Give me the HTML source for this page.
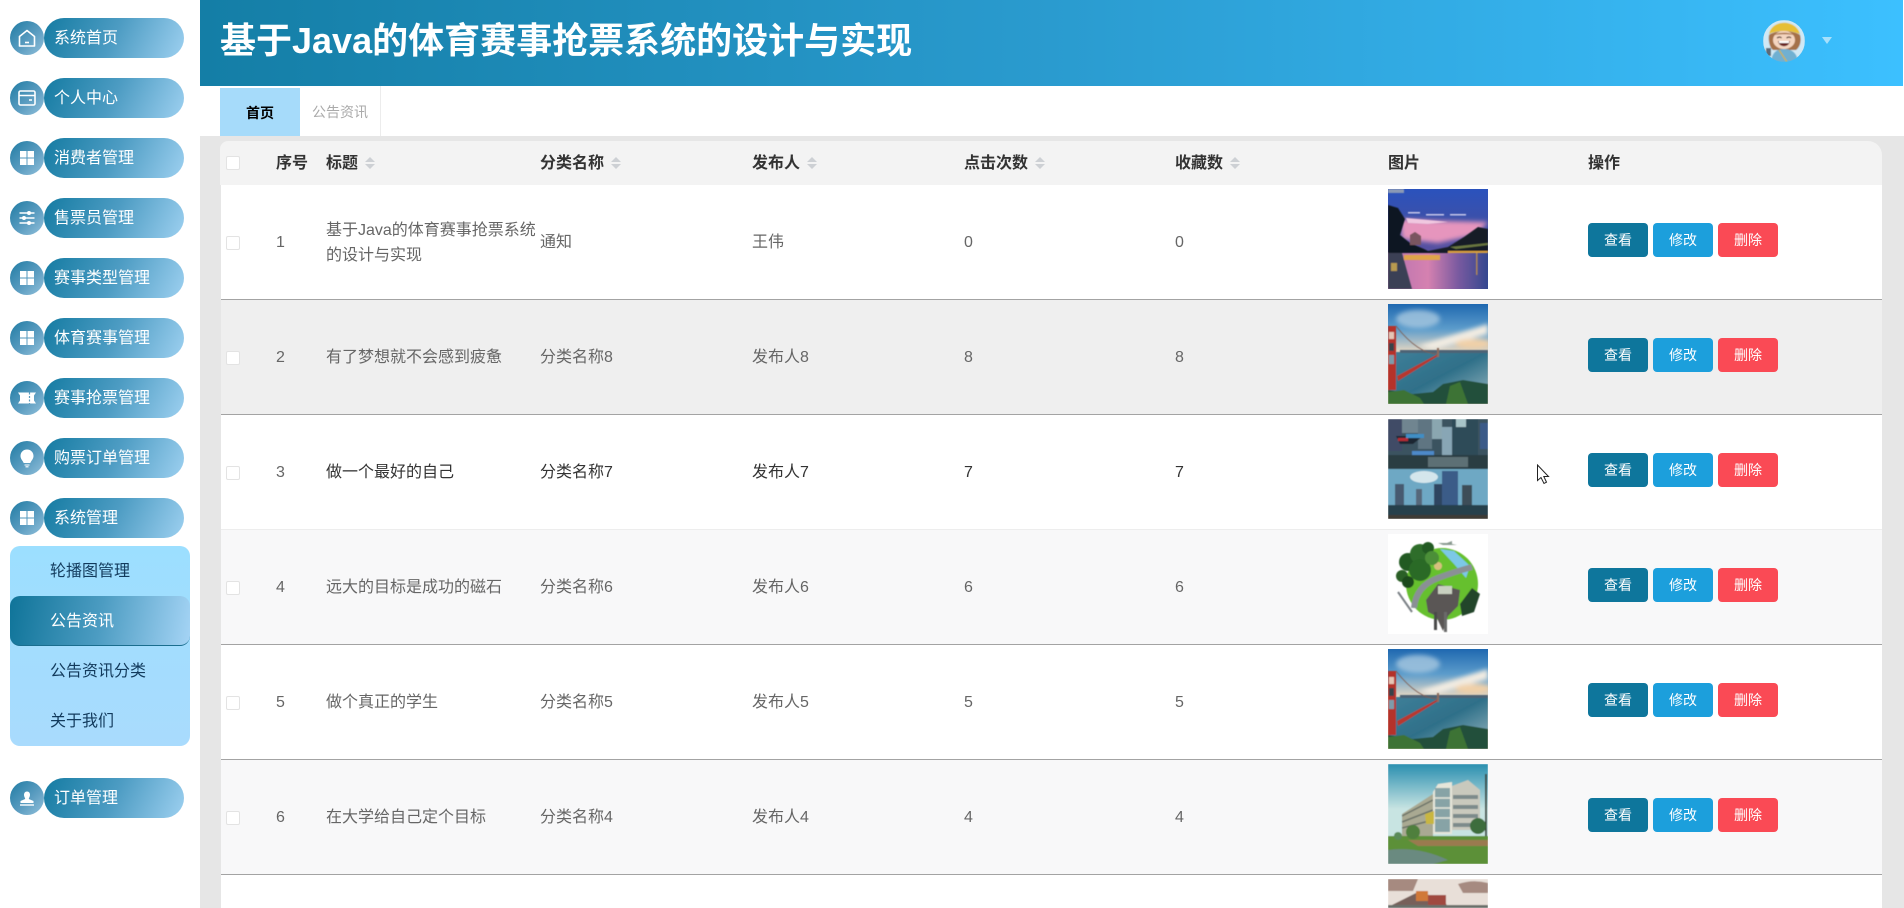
<!DOCTYPE html>
<html lang="zh-CN">
<head>
<meta charset="utf-8">
<title>基于Java的体育赛事抢票系统的设计与实现</title>
<style>
*{box-sizing:border-box}
html,body{margin:0;padding:0;width:1904px;height:908px;overflow:hidden;background:#fff}
body{position:relative;font-family:"Liberation Sans","Noto Sans CJK SC",sans-serif;font-size:16px}
.abs,.pill,.ci,.sub,.row,.t,.btn,.cb,.th,.sort,.img{position:absolute}
.ci{left:10px;width:34px;height:34px;border-radius:50%;background:linear-gradient(135deg,#1f7ba3 0%,#5a9cc0 55%,#93c1db 100%)}
.ci svg{position:absolute;left:7px;top:7px;width:20px;height:20px}
.pill{left:44px;width:140px;height:40px;border-radius:20px;background:linear-gradient(115deg,#147ba2 0%,#4d9cc3 50%,#9dd0f0 100%);color:#fff;line-height:42px;padding-left:10px;white-space:nowrap}
.sub{left:10px;width:180px;height:50px;line-height:52px;padding-left:40px;color:#123a5c}
.row{left:221px;width:1661px;height:115px;border-bottom:1px solid #a3a3a3;background:#fff;color:#666;overflow:hidden}
.t{line-height:24px;white-space:nowrap}
.th{top:152px;line-height:24px;font-weight:bold;color:#333;white-space:nowrap}
.sort{top:156px;width:10px;height:14px}
.cb{left:5px;width:14px;height:14px;background:#fff;border:1px solid #e3e3e3;border-radius:2px}
.btn{top:38px;width:60px;height:34px;border-radius:4px;color:#fff;font-size:14px;line-height:34px;text-align:center}
.b1{left:1367px;background:#0e769c}
.b2{left:1432px;background:#1c9fdc}
.b3{left:1497px;background:#fa4a55}
.img{left:1167px;top:4px;width:100px;height:100px;display:block}
</style>
</head>
<body>

<!-- Header -->
<div class="abs" style="left:200px;top:0;width:1703px;height:86px;background:linear-gradient(90deg,#147ea6 0%,#2a9bcf 50%,#3cc0ff 100%)"></div>
<div class="abs" style="left:220px;top:16px;height:50px;line-height:50px;font-size:36px;font-weight:bold;color:#fff;white-space:nowrap">基于Java的体育赛事抢票系统的设计与实现</div>

<!-- Avatar -->
<svg class="abs" style="left:1763px;top:20px" width="42" height="42" viewBox="0 0 42 42">
<defs><clipPath id="av"><circle cx="21" cy="21" r="21"/></clipPath><filter id="avb"><feGaussianBlur stdDeviation=".5"/></filter></defs>
<g clip-path="url(#av)" filter="url(#avb)">
<rect width="42" height="42" fill="#cfe8f5"/>
<path d="M6 14C9 -1 33 -1 37 14C27 10 15 10 6 14Z" fill="#e6bf35"/>
<path d="M6 15C12 10 31 10 37 15C39 22 36 28 33 30H10C7 28 5 21 6 15Z" fill="#a5714a"/>
<ellipse cx="21" cy="20" rx="11" ry="9" fill="#f4d5c0"/>
<path d="M11 15C15 12 27 12 31 15C26 14 16 14 11 15Z" fill="#a5714a"/>
<path d="M14 18q3-2 4.500 0M23.500 18q3-2 4.500 0" stroke="#4d2f22" stroke-width="1.200" fill="none"/>
<path d="M15 21H27C26 28 16 28 15 21Z" fill="#6a2828"/>
<rect x="16" y="21" width="10" height="2" fill="#fff"/>
<path d="M8 42C9 32 14 29 21 29C29 29 34 33 35 42Z" fill="#70b0d2"/>
<path d="M16 30L24 42" stroke="#d2b23c" stroke-width="1.200"/>
<rect x="3" y="28" width="5" height="8" fill="#5b6a78"/>
</g>
</svg>
<svg class="abs" style="left:1822px;top:37px" width="10" height="7" viewBox="0 0 10 7"><path d="M0 0H10L5 7Z" fill="#a8e0fb"/></svg>

<!-- Tabs -->
<div class="abs" style="left:220px;top:88px;width:80px;height:48px;background:#a6dbfa;color:#000;font-size:14px;font-weight:bold;line-height:50px;text-align:center">首页</div>
<div class="abs" style="left:300px;top:86px;width:81px;height:50px;border-right:1px solid #ececec;color:#aaa;font-size:14px;line-height:52px;padding-left:12px">公告资讯</div>

<!-- Content background -->
<div class="abs" style="left:200px;top:136px;width:1704px;height:772px;background:#e6e6e6"></div>
<div class="abs" style="left:1903px;top:0;width:1px;height:136px;background:#fff"></div>

<!-- Table head -->
<div class="abs" style="left:220px;top:141px;width:1662px;height:44px;background:#f3f3f3;border-radius:8px 14px 0 0"></div>
<div class="cb" style="left:226px;top:156px"></div>
<div class="th" style="left:276px">序号</div>
<div class="th" style="left:326px">标题</div>
<svg class="sort" style="left:365px" viewBox="0 0 10 14"><path d="M5 1L10 6H0ZM0 8H10L5 13Z" fill="#cdd0d4"/></svg>
<div class="th" style="left:540px">分类名称</div>
<svg class="sort" style="left:611px" viewBox="0 0 10 14"><path d="M5 1L10 6H0ZM0 8H10L5 13Z" fill="#cdd0d4"/></svg>
<div class="th" style="left:752px">发布人</div>
<svg class="sort" style="left:807px" viewBox="0 0 10 14"><path d="M5 1L10 6H0ZM0 8H10L5 13Z" fill="#cdd0d4"/></svg>
<div class="th" style="left:964px">点击次数</div>
<svg class="sort" style="left:1035px" viewBox="0 0 10 14"><path d="M5 1L10 6H0ZM0 8H10L5 13Z" fill="#cdd0d4"/></svg>
<div class="th" style="left:1175px">收藏数</div>
<svg class="sort" style="left:1230px" viewBox="0 0 10 14"><path d="M5 1L10 6H0ZM0 8H10L5 13Z" fill="#cdd0d4"/></svg>
<div class="th" style="left:1388px">图片</div>
<div class="th" style="left:1588px">操作</div>

<!-- Shared filter & bridge image -->
<svg width="0" height="0" style="position:absolute">
<defs>
<filter id="bl" x="-5%" y="-5%" width="110%" height="110%"><feGaussianBlur stdDeviation=".6"/></filter>
<filter id="bl2" x="-20%" y="-20%" width="140%" height="140%"><feGaussianBlur stdDeviation="2.500"/></filter>
<linearGradient id="brsky" x1="0" y1="0" x2="0" y2="1"><stop offset="0" stop-color="#1f68b0"/><stop offset=".25" stop-color="#5c9ccb"/><stop offset=".48" stop-color="#e8d8c2"/></linearGradient>
<linearGradient id="brw" x1="0" y1="0" x2="1" y2="1"><stop offset="0" stop-color="#3f7f99"/><stop offset=".5" stop-color="#2f7089"/><stop offset="1" stop-color="#9cb9c2"/></linearGradient>
<symbol id="bridge" viewBox="0 0 100 100">
<rect width="100" height="100" fill="url(#brsky)"/>
<g filter="url(#bl2)">
<ellipse cx="30" cy="15" rx="22" ry="9" fill="#a8c8e0" opacity=".8"/>
<path d="M30 42L100 20V30L45 46Z" fill="#f2ece2"/>
<ellipse cx="85" cy="40" rx="18" ry="5" fill="#f0d0a8"/>
</g>
<g filter="url(#bl)">
<rect y="48" width="100" height="52" fill="url(#brw)"/>
<rect x="12" y="46" width="88" height="3" fill="#4e6474"/>
<path d="M9 72L50 50V52L10 77Z" fill="#b8392f"/>
<rect x="0" y="22" width="8" height="64" fill="#b5332a"/>
<rect x="1" y="28" width="5" height="7" fill="#e5c5b5"/>
<rect x="1" y="39" width="5" height="8" fill="#39424a"/>
<rect x="1" y="51" width="5" height="9" fill="#7d9cab"/>
<path d="M8 22Q30 50 50 50" stroke="#7d5c50" stroke-width=".8" fill="none"/>
<rect x="49" y="44" width="2" height="9" fill="#8d6c5c"/>
<path d="M0 86L25 90L45 88L55 80L75 76L100 80V100H0Z" fill="#24503a"/>
<path d="M0 88L16 86L32 94L36 100H0ZM58 100L62 82L72 78L80 100Z" fill="#3d7334"/>
</g>
</symbol>
</defs>
</svg>

<!-- Row 1 -->
<div class="row" style="top:185px">
<div class="cb" style="top:51px"></div>
<div class="t" style="left:55px;top:46px">1</div>
<div class="t" style="left:105px;top:34px;line-height:24.500px">基于Java的体育赛事抢票系统<br>的设计与实现</div>
<div class="t" style="left:319px;top:46px">通知</div>
<div class="t" style="left:531px;top:46px">王伟</div>
<div class="t" style="left:743px;top:46px">0</div>
<div class="t" style="left:954px;top:46px">0</div>
<svg class="img" viewBox="0 0 100 100">
<defs><linearGradient id="ns" x1="0" y1="0" x2="0" y2="1"><stop offset="0" stop-color="#2a52bd"/><stop offset=".5" stop-color="#3d50a8"/><stop offset="1" stop-color="#5a50a0"/></linearGradient>
<linearGradient id="nw" x1="0" y1="0" x2="1" y2="0"><stop offset="0" stop-color="#b873b0"/><stop offset=".4" stop-color="#d581b0"/><stop offset=".7" stop-color="#7a5aa0"/><stop offset="1" stop-color="#34478f"/></linearGradient></defs>
<rect width="100" height="64" fill="url(#ns)"/>
<g filter="url(#bl2)"><path d="M12 30L60 32L100 33L88 46L50 54L14 50Z" fill="#e695bd"/></g>
<g filter="url(#bl)">
<path d="M18 29L40 31L60 33L40 35L20 34Z" fill="#f0c8e0"/>
<path d="M38 25h18v1.500H38ZM62 25h16v1.500H62ZM20 23h12v1.500H20Z" fill="#c8c8ea"/>
</g>
<rect y="63" width="100" height="37" fill="url(#nw)"/>
<g filter="url(#bl)">
<path d="M35 63L60 58L76 48L90 38L100 40V64L35 64Z" fill="#161e28"/>
<path d="M0 16L10 19L17 30L12 46L22 54L36 60L44 64H0Z" fill="#111820"/>
<path d="M22 46L27 43L33 47V56H22Z" fill="#7a5560"/>
<path d="M60 62H100V64H60Z" fill="#d9a040"/>
<path d="M62 58L100 54V56L68 60Z" fill="#6a7840"/>
<rect x="16" y="66" width="36" height="5" fill="#e0a44a"/>
<path d="M0 64H14L24 100H0Z" fill="#3a3f55"/>
<rect x="88" y="64" width="1.500" height="22" fill="#d8a040" opacity=".7"/>
<rect x="0" y="0" width="16" height="4" fill="#8a99b5"/>
<rect x="3" y="74" width="6" height="8" fill="#b89a50"/>
</g></svg>
<div class="btn b1">查看</div><div class="btn b2">修改</div><div class="btn b3">删除</div>
</div>

<!-- Row 2 -->
<div class="row" style="top:300px;background:#efefef">
<div class="cb" style="top:51px"></div>
<div class="t" style="left:55px;top:46px">2</div>
<div class="t" style="left:105px;top:46px">有了梦想就不会感到疲惫</div>
<div class="t" style="left:319px;top:46px">分类名称8</div>
<div class="t" style="left:531px;top:46px">发布人8</div>
<div class="t" style="left:743px;top:46px">8</div>
<div class="t" style="left:954px;top:46px">8</div>
<svg class="img" viewBox="0 0 100 100"><use href="#bridge" width="100" height="100"/></svg>
<div class="btn b1">查看</div><div class="btn b2">修改</div><div class="btn b3">删除</div>
</div>

<!-- Row 3 -->
<div class="row" style="top:415px;border-bottom-color:#ededed;color:#333">
<div class="cb" style="top:51px"></div>
<div class="t" style="left:55px;top:46px;color:#666">3</div>
<div class="t" style="left:105px;top:46px">做一个最好的自己</div>
<div class="t" style="left:319px;top:46px">分类名称7</div>
<div class="t" style="left:531px;top:46px">发布人7</div>
<div class="t" style="left:743px;top:46px">7</div>
<div class="t" style="left:954px;top:46px">7</div>
<svg class="img" viewBox="0 0 100 100"><g filter="url(#bl)">
<rect width="100" height="50" fill="#3a5260"/>
<rect x="0" y="0" width="14" height="32" fill="#3f4c66"/>
<rect x="14" y="0" width="16" height="14" fill="#6f8590"/>
<rect x="30" y="0" width="14" height="30" fill="#5f7582"/>
<rect x="44" y="0" width="10" height="20" fill="#8aa6b0"/>
<rect x="54" y="8" width="12" height="28" fill="#88a6b5"/>
<rect x="64" y="0" width="26" height="38" fill="#2d4c58"/>
<rect x="68" y="0" width="10" height="8" fill="#a8c4c8"/>
<rect x="92" y="4" width="8" height="26" fill="#3b5a88"/>
<path d="M8 17H35L25 25H12Z" fill="#1c2530"/>
<path d="M18 15H36V19H18Z" fill="#3f8ec4"/>
<rect x="10" y="19" width="10" height="3" fill="#b62a32"/>
<rect x="24" y="32" width="22" height="4" fill="#4e89c9"/>
<rect y="36" width="100" height="14" fill="#2b3e42"/>
<rect x="40" y="38" width="40" height="10" fill="#5d7074"/>
<rect y="50" width="100" height="36" fill="#6ea8c4"/>
<ellipse cx="36" cy="58" rx="14" ry="6" fill="#d4e6ec"/>
<rect x="7" y="65" width="9" height="22" fill="#465a70"/>
<rect x="28" y="70" width="6" height="16" fill="#56687a"/>
<rect x="46" y="65" width="8" height="22" fill="#2f4560"/>
<rect x="54" y="52" width="16" height="36" fill="#3a5c88"/>
<rect x="74" y="66" width="10" height="22" fill="#3d4d58"/>
<rect y="86" width="100" height="10" fill="#27414b"/>
<rect x="0" y="96" width="100" height="4" fill="#3e3a35"/>
</g></svg>
<div class="btn b1">查看</div><div class="btn b2">修改</div><div class="btn b3">删除</div>
</div>

<!-- Row 4 -->
<div class="row" style="top:530px;background:#f8f8f9">
<div class="cb" style="top:51px"></div>
<div class="t" style="left:55px;top:46px">4</div>
<div class="t" style="left:105px;top:46px">远大的目标是成功的磁石</div>
<div class="t" style="left:319px;top:46px">分类名称6</div>
<div class="t" style="left:531px;top:46px">发布人6</div>
<div class="t" style="left:743px;top:46px">6</div>
<div class="t" style="left:954px;top:46px">6</div>
<svg class="img" viewBox="0 0 100 100"><rect width="100" height="100" fill="#fff"/><g filter="url(#bl)">
<circle cx="54" cy="50" r="36" fill="#66c02e"/>
<path d="M52 15L66 17L82 32L78 44L66 30Z" fill="#7cc8e6"/>
<circle cx="50" cy="32" r="4" fill="#d6c07e"/>
<circle cx="14" cy="42" r="6" fill="#2a5f26"/><circle cx="20" cy="28" r="9" fill="#245a22"/>
<circle cx="32" cy="20" r="10" fill="#2f6d2a"/><circle cx="40" cy="14" r="6" fill="#245a22"/><circle cx="32" cy="36" r="11" fill="#2b6a28"/>
<circle cx="44" cy="24" r="7" fill="#4b8f38"/>
<circle cx="20" cy="48" r="6" fill="#1f4a1e"/>
<path d="M26 74Q28 52 50 44Q66 38 84 33" stroke="#8a9095" stroke-width="6" fill="none"/>
<path d="M10 58L24 78" stroke="#7a8085" stroke-width="2" fill="none"/>
<path d="M38 66L50 50L72 56L70 72L60 82L55 97L48 82L40 78Z" fill="#5a5654"/>
<rect x="50" y="52" width="14" height="8" fill="#c8d0c0"/>
<rect x="46" y="78" width="3" height="18" fill="#4a4a4a"/><rect x="56" y="78" width="3" height="20" fill="#6a6a6a"/>
<path d="M84 54L92 60L86 78L74 82L72 70Z" fill="#20442a"/>
<path d="M50 9h9l5-2v3l5 1H55Z" fill="#8a9a90"/>
</g></svg>
<div class="btn b1">查看</div><div class="btn b2">修改</div><div class="btn b3">删除</div>
</div>

<!-- Row 5 -->
<div class="row" style="top:645px">
<div class="cb" style="top:51px"></div>
<div class="t" style="left:55px;top:46px">5</div>
<div class="t" style="left:105px;top:46px">做个真正的学生</div>
<div class="t" style="left:319px;top:46px">分类名称5</div>
<div class="t" style="left:531px;top:46px">发布人5</div>
<div class="t" style="left:743px;top:46px">5</div>
<div class="t" style="left:954px;top:46px">5</div>
<svg class="img" viewBox="0 0 100 100"><use href="#bridge" width="100" height="100"/></svg>
<div class="btn b1">查看</div><div class="btn b2">修改</div><div class="btn b3">删除</div>
</div>

<!-- Row 6 -->
<div class="row" style="top:760px;background:#f8f8f9">
<div class="cb" style="top:51px"></div>
<div class="t" style="left:55px;top:46px">6</div>
<div class="t" style="left:105px;top:46px">在大学给自己定个目标</div>
<div class="t" style="left:319px;top:46px">分类名称4</div>
<div class="t" style="left:531px;top:46px">发布人4</div>
<div class="t" style="left:743px;top:46px">4</div>
<div class="t" style="left:954px;top:46px">4</div>
<svg class="img" viewBox="0 0 100 100"><g filter="url(#bl)">
<defs><linearGradient id="bs" x1="0" y1="0" x2="0" y2="1"><stop offset="0" stop-color="#2a8fb0"/><stop offset=".6" stop-color="#c8e4e2"/></linearGradient></defs>
<rect width="100" height="75" fill="url(#bs)"/>
<path d="M14 50L45 30V72H14Z" fill="#a9a992"/>
<path d="M14 52L45 36M14 58L45 46M14 64L45 56" stroke="#6b7268" stroke-width="1.500"/>
<path d="M45 28L50 20L64 18V70H45Z" fill="#e6e6da"/>
<path d="M47 24h15v44H47Z" fill="#55808a" opacity=".65"/>
<path d="M47 34h15M47 44h15M47 54h15" stroke="#e6e6da" stroke-width="1.500"/>
<path d="M64 22L80 16L92 26V66H64Z" fill="#c9c9bd"/>
<path d="M65 31h25v4H65ZM65 41h25v4H65ZM65 50h25v4H65ZM65 59h25v4H65Z" fill="#7d8b8b"/>
<path d="M37 50L46 47V60L38 60Z" fill="#c8b640"/>
<rect x="97" y="10" width="2" height="70" fill="#3d4a40"/>
<circle cx="90" cy="62" r="8" fill="#3c6d3c"/>
<rect y="72" width="100" height="28" fill="#5c9038"/>
<path d="M0 86Q30 82 60 96L45 100H0Z" fill="#6a8a80"/>
<path d="M20 76H100V82H30Z" fill="#9a7a50"/>
<circle cx="25" cy="68" r="7" fill="#4f7f3e"/>
<circle cx="10" cy="72" r="4" fill="#5a8a58"/>
</g></svg>
<div class="btn b1">查看</div><div class="btn b2">修改</div><div class="btn b3">删除</div>
</div>

<!-- Row 7 -->
<div class="row" style="top:875px;height:33px;border-bottom:0">
<svg class="img" style="height:29px" viewBox="0 0 100 29"><g filter="url(#bl)">
<rect width="100" height="29" fill="#e8dfd8"/>
<path d="M0 0H30L25 12H0ZM70 5Q85 0 100 4V14H75Z" fill="#a68a80"/>
<path d="M0 28L28 14L55 18L60 29H0Z" fill="#77605a"/>
<rect x="28" y="12" width="12" height="10" fill="#d07838"/>
<rect x="40" y="16" width="18" height="13" fill="#a04a40"/>
<rect y="26" width="100" height="3" fill="#6a706a"/>
</g></svg>
</div>

<!-- Cursor -->
<svg class="abs" style="left:1536px;top:464px" width="14" height="21" viewBox="0 0 14 21"><path d="M1.500 1V16.500L5 13.500L8 19.500L10.500 18.200L7.800 12.500H12.500Z" fill="#fff" stroke="#222" stroke-width="1"/></svg>

<!-- Sidebar -->
<div class="ci" style="top:21px"><svg viewBox="0 0 20 20"><path d="M2.500 8.500L10 2.500L17.500 8.500V18H2.500Z" fill="none" stroke="#fff" stroke-width="1.600" stroke-linejoin="round"/><path d="M8 14.500H12" stroke="#fff" stroke-width="1.600"/></svg></div>
<div class="pill" style="top:18px">系统首页</div>
<div class="ci" style="top:81px"><svg viewBox="0 0 20 20"><rect x="2" y="3" width="16" height="14" rx="1.500" fill="none" stroke="#fff" stroke-width="1.600"/><path d="M2.500 7.500H17.500M12 12H15" stroke="#fff" stroke-width="1.600"/></svg></div>
<div class="pill" style="top:78px">个人中心</div>
<div class="ci" style="top:141px"><svg viewBox="0 0 20 20"><path d="M3 3h6.500v6.500H3zM10.500 3H17v6.500h-6.500zM3 10.500h6.500V17H3zM10.500 10.500H17V17h-6.500z" fill="#fff"/></svg></div>
<div class="pill" style="top:138px">消费者管理</div>
<div class="ci" style="top:201px"><svg viewBox="0 0 20 20"><path d="M2.500 5H17.500M2.500 10H17.500M2.500 15H17.500" stroke="#fff" stroke-width="1.400"/><circle cx="12" cy="5" r="2" fill="#fff"/><circle cx="7" cy="10" r="2" fill="#fff"/><circle cx="12" cy="15" r="2" fill="#fff"/></svg></div>
<div class="pill" style="top:198px">售票员管理</div>
<div class="ci" style="top:261px"><svg viewBox="0 0 20 20"><path d="M3 3h6.500v6.500H3zM10.500 3H17v6.500h-6.500zM3 10.500h6.500V17H3zM10.500 10.500H17V17h-6.500z" fill="#fff"/></svg></div>
<div class="pill" style="top:258px">赛事类型管理</div>
<div class="ci" style="top:321px"><svg viewBox="0 0 20 20"><path d="M3 3h6.500v6.500H3zM10.500 3H17v6.500h-6.500zM3 10.500h6.500V17H3zM10.500 10.500H17V17h-6.500z" fill="#fff"/></svg></div>
<div class="pill" style="top:318px">体育赛事管理</div>
<div class="ci" style="top:381px"><svg viewBox="0 0 20 20"><path d="M1 4.500H19L17 7.500V12.500L19 15.500H1L3 12.500V7.500Z" fill="#fff"/><path d="M12.500 4.500V15.500" stroke="#5a9cc0" stroke-width="1.200" stroke-dasharray="2 1.500"/></svg></div>
<div class="pill" style="top:378px">赛事抢票管理</div>
<div class="ci" style="top:441px"><svg viewBox="0 0 20 20"><path d="M10 1.500C6 1.500 3.500 4.500 3.500 8C3.500 11 5.700 12.500 6.700 15H13.300C14.300 12.500 16.500 11 16.500 8C16.500 4.500 14 1.500 10 1.500Z" fill="#fff"/><path d="M7.500 17H12.500M8.500 18.800H11.500" stroke="#fff" stroke-width="1.100"/></svg></div>
<div class="pill" style="top:438px">购票订单管理</div>
<div class="ci" style="top:501px"><svg viewBox="0 0 20 20"><path d="M3 3h6.500v6.500H3zM10.500 3H17v6.500h-6.500zM3 10.500h6.500V17H3zM10.500 10.500H17V17h-6.500z" fill="#fff"/></svg></div>
<div class="pill" style="top:498px">系统管理</div>

<div class="abs" style="left:10px;top:546px;width:180px;height:200px;border-radius:10px;background:linear-gradient(180deg,#9cdfff 0%,#a9dbfd 100%)"></div>
<div class="sub" style="top:546px">轮播图管理</div>
<div class="sub" style="top:596px;border-radius:10px;color:#fff;background:linear-gradient(100deg,#0f7499 0%,#4c9cc2 50%,#a5d4f5 100%);border-bottom:1px solid #1a6e8f">公告资讯</div>
<div class="sub" style="top:646px">公告资讯分类</div>
<div class="sub" style="top:696px">关于我们</div>

<div class="ci" style="top:781px"><svg viewBox="0 0 20 20"><path d="M10 3.500C8 3.500 7 5 7 7C7 8.800 8.200 9.800 8.200 11L3.500 13V15H16.500V13L11.800 11C11.800 9.800 13 8.800 13 7C13 5 12 3.500 10 3.500Z" fill="#fff"/><path d="M3 17H17" stroke="#fff" stroke-width="1.400"/></svg></div>
<div class="pill" style="top:778px">订单管理</div>

</body>
</html>
